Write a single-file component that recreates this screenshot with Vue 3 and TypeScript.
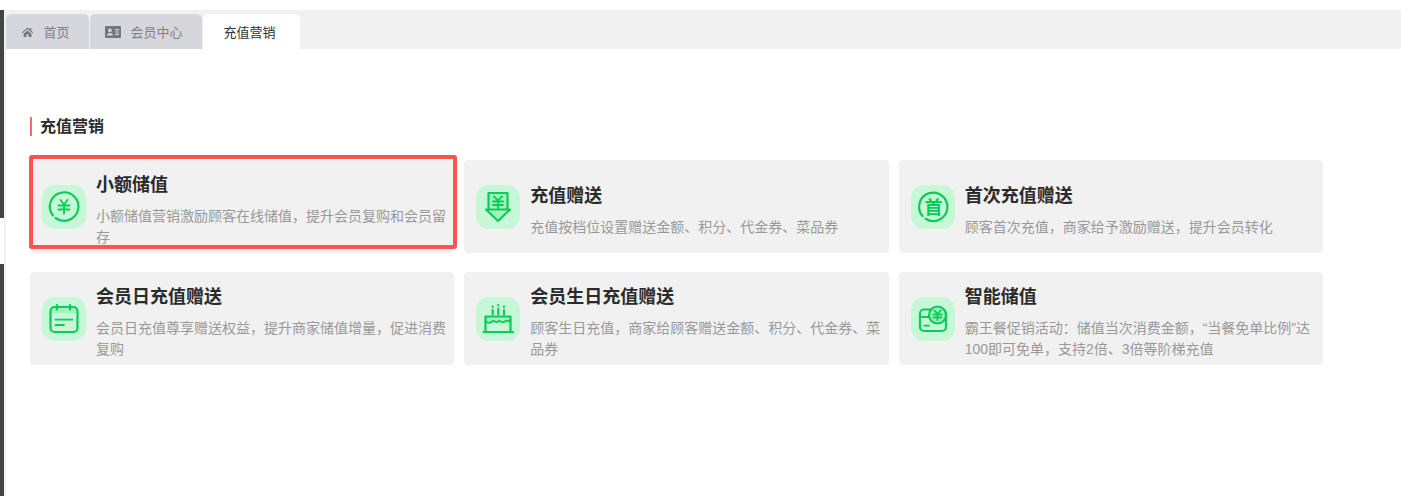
<template>
  <div class="page">
    <!-- thin dark rail on the far left -->
    <aside class="rail" aria-hidden="true">
      <div class="rail-top"></div>
      <div class="rail-dark"></div>
      <div class="rail-gap"></div>
      <div class="rail-dark rail-fill"></div>
    </aside>

    <main class="main">
      <nav class="tabs">
        <div class="tab" style="width: 83px">
          <svg class="tab-ico" viewBox="0 0 16 14" aria-hidden="true">
            <path d="M8 1.5L1 7.6l.9 1L8 3.3l6.1 5.3.9-1-2.4-2.1V2.2h-1.9v1.6z" />
            <path d="M3.2 9.2L8 5l4.8 4.2V13H9.3V9.9H6.7V13H3.2z" />
          </svg>
          <span>首页</span>
        </div>
        <div class="tab" style="width: 112px">
          <svg class="tab-ico tab-ico-card" viewBox="0 0 16 12" aria-hidden="true">
            <path fill-rule="evenodd" d="M1 0h14a1 1 0 0 1 1 1v10a1 1 0 0 1-1 1H1a1 1 0 0 1-1-1V1a1 1 0 0 1 1-1zm9 3v1.2h4V3zm0 2.4v1.2h4V5.4zm0 2.4V9h4V7.8zM5 2.6a1.8 1.8 0 1 0 0 3.6 1.8 1.8 0 0 0 0-3.6zM2 9.6h6c0-1.6-1.2-2.7-3-2.7S2 8 2 9.6z" />
          </svg>
          <span>会员中心</span>
        </div>
        <div class="tab tab-active" style="width: 97px">
          <span>充值营销</span>
        </div>
      </nav>

      <section class="content">
        <h2 class="heading">充值营销</h2>
        <div class="grid">
          <div v-for="(card, i) in cards" :key="card.title" class="card">
            <div v-if="i === 0" class="highlight" aria-hidden="true"></div>
            <div class="icon">
              <svg viewBox="0 0 44 44" aria-hidden="true" class="icon-svg">
                <template v-if="card.icon === 'coin'">
                  <path d="M13.600 33A14.250 14.250 0 1 0 11 30.500" />
                  <path d="M18.500 15l3.500 4.500 3.500-4.500M16.500 20.500h11M16.500 24.500h11M22 20v8.500" class="thin" />
                </template>
                <template v-else-if="card.icon === 'down'">
                  <path d="M12.500 24V8h19v16" class="tint" />
                  <path d="M10 24.500h24L22 36z" class="tint" />
                  <path d="M18 11.500l4 4 4-4M17 16.500h10M17 20h10M22 16v7.500" class="thin" />
                </template>
                <template v-else-if="card.icon === 'first'">
                  <path d="M14.600 33.700A14.170 14.170 0 1 0 11.500 31" />
                  <text x="22.500" y="28.500" class="glyph">首</text>
                </template>
                <template v-else-if="card.icon === 'calendar'">
                  <path d="M8.500 16V14a4 4 0 0 1 4-4h19a4 4 0 0 1 4 4v2z" class="tint-flat" />
                  <rect x="8.500" y="10" width="27" height="25" rx="4" />
                  <path d="M15 8v4.500M28 8v4.500" />
                  <path d="M13.500 22.700h17M13.500 28h8.500" class="thin" />
                </template>
                <template v-else-if="card.icon === 'cake'">
                  <path d="M9.500 25v-5.500h25V25z" class="tint-flat" />
                  <path d="M9.500 34.500v-15h25v15" />
                  <path d="M9.500 24c2.500 2.500 4.500 2.500 6.500 0.500s4 2 6 0 4 2 6 0.500 4-2 6.500 0" class="thin" />
                  <path d="M7.500 35h29.500" />
                  <path d="M16.700 9.500v0.500M16.700 13v4.500M22.300 8v0.500M22.300 11.500v6M28 9.500v0.500M28 13v4.500" />
                </template>
                <template v-else>
                  <rect x="9" y="12.500" width="26" height="21.500" rx="4" />
                  <path d="M9 20h9" class="thin" />
                  <path d="M13.500 28.700h4.500" class="thin" />
                  <circle cx="26.500" cy="18" r="8.500" class="tint-solid" />
                  <path d="M23.500 13.500l3 3.500 3-3.500M22.500 17.500h8M22.500 20.500h8M26.500 17v6" class="thin" />
                </template>
              </svg>
            </div>
            <div class="body">
              <div class="title">{{ card.title }}</div>
              <div class="desc">{{ card.desc }}</div>
            </div>
          </div>
        </div>
      </section>
    </main>
  </div>
</template>

<script setup lang="ts">
type IconName = "coin" | "down" | "first" | "calendar" | "cake" | "wallet";

interface Card {
  title: string;
  desc: string;
  icon: IconName;
}

const cards: Card[] = [
  { title: "小额储值", desc: "小额储值营销激励顾客在线储值，提升会员复购和会员留存", icon: "coin" },
  { title: "充值赠送", desc: "充值按档位设置赠送金额、积分、代金券、菜品券", icon: "down" },
  { title: "首次充值赠送", desc: "顾客首次充值，商家给予激励赠送，提升会员转化", icon: "first" },
  { title: "会员日充值赠送", desc: "会员日充值尊享赠送权益，提升商家储值增量，促进消费复购", icon: "calendar" },
  { title: "会员生日充值赠送", desc: "顾客生日充值，商家给顾客赠送金额、积分、代金券、菜品券", icon: "cake" },
  { title: "智能储值", desc: "霸王餐促销活动：储值当次消费金额，“当餐免单比例”达100即可免单，支持2倍、3倍等阶梯充值", icon: "wallet" },
];
</script>

<style scoped>
.page {
  display: flex;
  height: 496px;
  overflow: hidden;
  background: #fff;
  font-family: "Liberation Sans", "Noto Sans CJK SC", sans-serif;
}

/* left rail */
.rail {
  width: 4px;
  flex: none;
  display: flex;
  flex-direction: column;
}
.rail-top { height: 10px; }
.rail-dark { height: 208px; background: #434543; }
.rail-gap { height: 46px; }
.rail-fill { flex: 1; }

.main {
  flex: 1;
  min-width: 0;
  margin-top: 10px;
  border-left: 2px solid #f1f1f1;
}

/* tab strip */
.tabs {
  height: 39px;
  padding-top: 4px;
  box-sizing: border-box;
  display: flex;
  gap: 1px;
  background: #f1f1f1;
}
.tab {
  display: flex;
  align-items: center;
  justify-content: center;
  gap: 9px;
  padding-right: 4px;
  box-sizing: border-box;
  border-radius: 5px 5px 0 0;
  background: #d6d7dc;
  color: #7f8085;
  font-size: 13px;
}
.tab-active {
  background: #fff;
  color: #303133;
}
.tab-ico {
  width: 13px;
  height: 12px;
  fill: #75767b;
}
.tab-ico-card {
  width: 16px;
  height: 12px;
}

/* content */
.content {
  padding: 68px 0 0 24px;
  width: 1293px;
}
.heading {
  margin: 0;
  padding-left: 8px;
  height: 19px;
  line-height: 19px;
  border-left: 2px solid #fb6b6b;
  font-size: 16px;
  font-weight: 700;
  color: #2b2b2b;
}
.grid {
  margin-top: 24px;
  display: grid;
  grid-template-columns: repeat(3, 1fr);
  grid-auto-rows: 93px;
  column-gap: 10px;
  row-gap: 19px;
}
.card {
  position: relative;
  display: flex;
  align-items: center;
  padding: 0 8px 0 12px;
  border-radius: 4px;
  background: #f1f1f1;
}
/* red marker drawn over the first card */
.highlight {
  position: absolute;
  left: -1px;
  top: -5px;
  width: 428px;
  height: 94px;
  box-sizing: border-box;
  border: 4px solid #ff5252;
  border-radius: 3px;
}
.icon {
  width: 44px;
  height: 44px;
  flex: none;
  margin-right: 10px;
  border-radius: 13px;
  background: #c6f7d6;
}
.icon-svg {
  display: block;
  width: 44px;
  height: 44px;
  fill: none;
  stroke: #0ccb58;
  stroke-width: 2.2;
  stroke-linecap: round;
  stroke-linejoin: round;
}
.thin { stroke-width: 1.800; }
.tint { fill: #a5f0bf; }
.tint-flat { fill: #a5f0bf; stroke: none; }
.tint-solid { fill: #9eeeba; }
.glyph {
  fill: #0ccb58;
  stroke: none;
  font-size: 18px;
  font-weight: 700;
  text-anchor: middle;
}
.body {
  min-width: 0;
  padding-top: 8px;
}
.title {
  font-size: 18px;
  line-height: 25px;
  font-weight: 700;
  color: #2b2b2b;
}
.desc {
  margin-top: 8px;
  font-size: 14px;
  line-height: 21px;
  color: #999;
}
</style>
